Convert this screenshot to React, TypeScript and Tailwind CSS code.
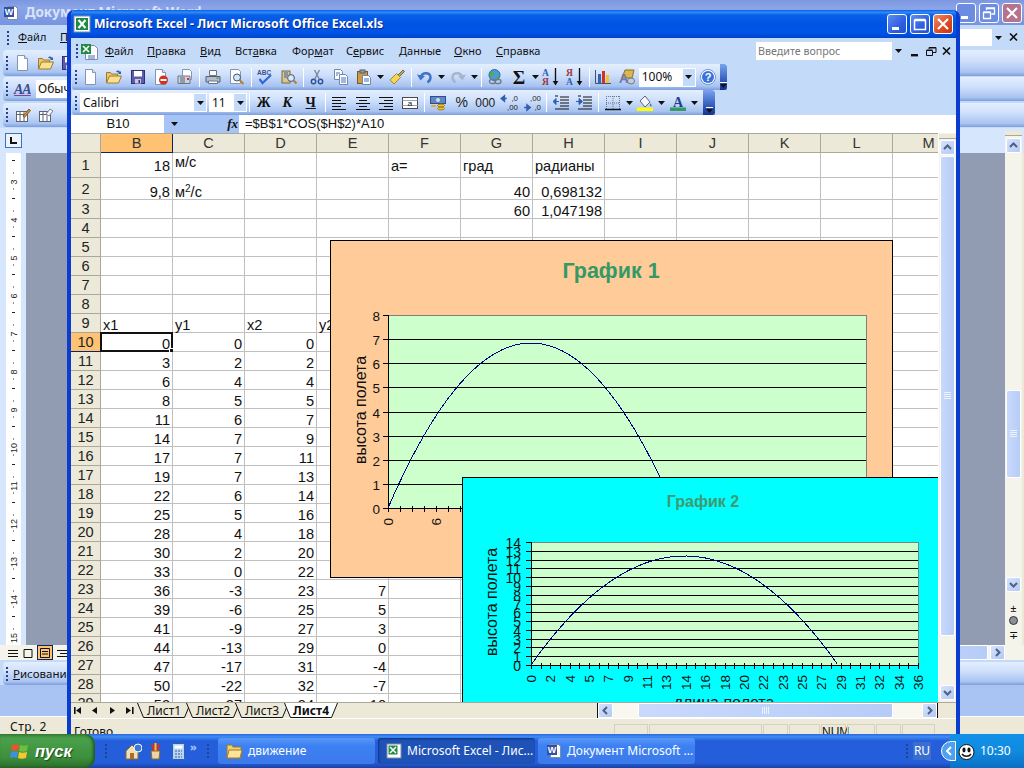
import type { ReactNode } from "react"

const ui = "font-['Noto_Sans','DejaVu_Sans',sans-serif]"
const barBg = "bg-[linear-gradient(to_bottom,#e4effe,#cfe0fb_40%,#a9c4f1_85%,#7d9ddb)]"
const arial = "font-['Liberation_Sans',Arial,sans-serif]"

function Ic({ children, s = 16 }: { children: ReactNode; s?: number }) {
  return (
    <svg width={s} height={s} viewBox="0 0 16 16" className="shrink-0">
      {children}
    </svg>
  )
}

const Page = () => (
  <>
    <path d="M2.5.5h7l3 3v12h-10z" fill="#fff" stroke="#8096b8" />
    <path d="M9.5.5v3h3" fill="#dbe6f7" stroke="#8096b8" />
  </>
)
const DocIcon = () => <Ic><Page /></Ic>
const OpenIcon = () => (
  <Ic>
    <path d="M.5 14V3.5h4l1 1.5h6v2" fill="#eec765" stroke="#9c7a34" />
    <path d="M.5 14l3-7h12l-3 7z" fill="#fbe08e" stroke="#9c7a34" />
    <path d="M10 3c1-2 3-2 4 0l1-1v3h-3l1-1c-1-1-2-1-3-1z" fill="#2f5fb0" />
  </Ic>
)
const SaveIcon = () => (
  <Ic>
    <rect x="1.5" y="1.5" width="13" height="13" fill="#5c5cab" stroke="#30307a" />
    <rect x="4" y="2" width="8" height="5.5" fill="#fff" />
    <rect x="5" y="10" width="6" height="4.5" fill="#c9c9e2" />
    <rect x="8.5" y="11" width="1.5" height="3" fill="#30307a" />
  </Ic>
)
const PermIcon = () => (
  <Ic>
    <Page />
    <circle cx="10.5" cy="11" r="4.5" fill="#d7301f" />
    <rect x="7.5" y="10" width="6" height="2" fill="#fff" />
  </Ic>
)
const MailIcon = () => (
  <Ic>
    <path d="M5.5.5h7l2 2v8h-9z" fill="#fff" stroke="#8096b8" />
    <path d="M1 7h12v7.5H1z" fill="#cdd3dd" stroke="#6a7488" />
    <path d="M3 9h5M3 11h5M3 13h5" stroke="#59647a" />
    <rect x="10" y="9" width="2" height="2" fill="#d33" />
  </Ic>
)
const PrintIcon = () => (
  <Ic>
    <path d="M4.5 1.5h7v5h-7z" fill="#fff" stroke="#6a7488" />
    <path d="M1 7.5h14v5.5H1z" fill="#b5bdca" stroke="#555f74" />
    <path d="M3.5 12h9v2.5h-9z" fill="#fff" stroke="#6a7488" />
    <rect x="11.5" y="8.5" width="2" height="1.5" fill="#37b24a" />
  </Ic>
)
const PreviewIcon = () => (
  <Ic>
    <path d="M1.5.5h8l2 2v12h-10z" fill="#fff" stroke="#8096b8" />
    <circle cx="8" cy="8.5" r="3.5" fill="#cfe6fb" stroke="#47536a" />
    <path d="M10.5 11l4 4" stroke="#b57f33" strokeWidth="2" />
  </Ic>
)
const SpellIcon = () => (
  <Ic>
    <text x="0" y="6" className={arial} fontSize="6.5" fontWeight="700" fill="#3a4f8c">ABC</text>
    <path d="M2.5 10l3 4L14 6" fill="none" stroke="#2f6bd6" strokeWidth="2.2" />
  </Ic>
)
const ResearchIcon = () => (
  <Ic>
    <rect x="1" y="2" width="8" height="12" fill="#d8c68d" stroke="#7a6a3a" />
    <path d="M3 4h4M3 6h4M3 8h3" stroke="#3a63ad" />
    <circle cx="10" cy="9" r="3.4" fill="#d7ecfb" stroke="#47536a" />
    <path d="M12.5 11.5l3 3" stroke="#b57f33" strokeWidth="2" />
  </Ic>
)
const CutIcon = () => (
  <Ic>
    <circle cx="4.5" cy="12.5" r="2.2" fill="none" stroke="#2c4f9c" strokeWidth="1.4" />
    <circle cx="11.5" cy="12.5" r="2.2" fill="none" stroke="#2c4f9c" strokeWidth="1.4" />
    <path d="M5.5 10.5L10.5 1M10.5 10.5L5.5 1" stroke="#78849a" strokeWidth="1.3" />
  </Ic>
)
const CopyIcon = () => (
  <Ic>
    <path d="M1.5.5h6l2 2v8h-8z" fill="#fff" stroke="#6f88b4" />
    <path d="M6.5 5.5h6l2 2v8h-8z" fill="#fff" stroke="#6f88b4" />
    <path d="M3 4h4M3 6h2M8 9h5M8 11h5M8 13h5" stroke="#4d6fb8" />
  </Ic>
)
const PasteIcon = () => (
  <Ic>
    <rect x="1.5" y="2.5" width="10" height="12" fill="#cf9a47" stroke="#7c5a22" />
    <rect x="4" y="1" width="5" height="3" fill="#8f98a8" stroke="#555f74" />
    <path d="M6.5 6.5h6l2 2v7h-8z" fill="#fff" stroke="#6f88b4" />
    <path d="M8 10h5M8 12h5" stroke="#4d6fb8" />
  </Ic>
)
const PainterIcon = () => (
  <Ic>
    <path d="M9 6l5-5 1.5 1.5-5 5z" fill="#b9a36d" stroke="#7a6a3a" />
    <path d="M1 11l6.5-6.5 4 4L5 15z" fill="#f4d558" stroke="#a38a2e" />
  </Ic>
)
const UndoIcon = ({ c, flip }: { c: string; flip?: boolean }) => (
  <Ic>
    <g transform={flip ? "matrix(-1 0 0 1 16 0)" : undefined}>
      <path d="M4 8c1-5 9-5 9.5 0 .2 2-1 4-3 5.5" fill="none" stroke={c} strokeWidth="2.4" />
      <path d="M0 5.5l3.5 6 4.5-4.5z" fill={c} />
    </g>
  </Ic>
)
const LinkIcon = () => (
  <Ic>
    <circle cx="7.5" cy="6" r="5.5" fill="#4e9ad8" stroke="#2e6a9e" />
    <path d="M4 3c2-1 3 0 3 1.5S5 6 5 8 3 7 2.5 5.5zM9 7c2 0 3 0 2.5 1.5S9 10 9 9z" fill="#4caf50" />
    <rect x="2.5" y="10.5" width="6" height="4" rx="2" fill="none" stroke="#6f7a8c" strokeWidth="1.3" />
    <rect x="8" y="10.5" width="6" height="4" rx="2" fill="none" stroke="#6f7a8c" strokeWidth="1.3" />
  </Ic>
)
const SortIcon = ({ top, bottom, topC, botC }: { top: string; bottom: string; topC: string; botC: string }) => (
  <Ic s={18}>
    <text x="0" y="7.5" className="font-['Liberation_Serif',serif]" fontSize="8.5" fontWeight="700" fill={topC}>{top}</text>
    <text x="0" y="15.5" className="font-['Liberation_Serif',serif]" fontSize="8.5" fontWeight="700" fill={botC}>{bottom}</text>
    <path d="M12 0v13" stroke="#111" strokeWidth="1.2" />
    <path d="M9.5 11.5h5L12 15.5z" fill="#111" />
  </Ic>
)
const ChartIcon = () => (
  <Ic>
    <path d="M.5 1v13.5H16" fill="none" stroke="#47536a" />
    <rect x="3" y="5" width="3" height="9" fill="#3a63ad" />
    <rect x="7" y="2" width="3" height="12" fill="#d7301f" />
    <rect x="11" y="6" width="3" height="8" fill="#f2c230" />
  </Ic>
)
const DrawIcon = () => (
  <Ic>
    <path d="M6 1h9l-2 8H3z" fill="#dcb74e" stroke="#8a7126" />
    <text x="0" y="14" className={arial} fontSize="13" fontWeight="700" fill="#6b76b8">A</text>
    <ellipse cx="12" cy="12" rx="3.5" ry="3" fill="#c9ccd6" stroke="#6f7a8c" />
  </Ic>
)
const HelpIcon = () => (
  <Ic>
    <circle cx="8" cy="8" r="7.5" fill="#fff" stroke="#6b94dd" />
    <circle cx="8" cy="8" r="6" fill="#3a72d8" />
    <text x="8" y="12" textAnchor="middle" className={arial} fontSize="11" fontWeight="700" fill="#fff">?</text>
  </Ic>
)
const Lines = ({ d }: { d: string }) => (
  <Ic><path d={d} stroke="#111" strokeWidth="1" fill="none" /></Ic>
)
const MergeIcon = () => (
  <Ic>
    <rect x=".5" y="2.5" width="15" height="11" fill="#fff" stroke="#4a4a4a" />
    <path d="M.5 5.5h15M.5 10.5h15" stroke="#9aa5b8" />
    <text x="8" y="11" textAnchor="middle" className={arial} fontSize="8" fill="#111">a</text>
  </Ic>
)
const MoneyIcon = () => (
  <Ic>
    <rect x=".5" y="1.5" width="15" height="7" fill="#5f86c6" stroke="#2d4f8d" />
    <circle cx="8" cy="5" r="2" fill="#cddcf3" />
    <ellipse cx="11" cy="10.5" rx="3.5" ry="1.4" fill="#f2c230" stroke="#a37d14" />
    <ellipse cx="11" cy="13.5" rx="3.5" ry="1.4" fill="#f2c230" stroke="#a37d14" />
    <path d="M1 11h5" stroke="#f2a530" strokeWidth="2" />
  </Ic>
)
const DecIcon = ({ a, b, flip }: { a: string; b: string; flip?: boolean }) => (
  <Ic s={18}>
    <text x="16" y="6.5" textAnchor="end" className={arial} fontSize="7" fill="#222">{a}</text>
    <text x="16" y="14.5" textAnchor="end" className={arial} fontSize="7" fill="#222">{b}</text>
    <path d={flip ? "M1 12h4M3.5 9.5l3 2.5-3 2.5z" : "M2 4h4M4 1.5L1 4l3 2.5z"} stroke="#2f5fb0" fill="#2f5fb0" strokeWidth="1.2" />
  </Ic>
)
const IndentIcon = ({ right }: { right?: boolean }) => (
  <Ic>
    <path d="M7 2h9M7 5h9M7 8h9M7 11h9M2 14h14M2 1h3" stroke="#111" />
    <path d={right ? "M0 6.5h4M3 3.5L6.5 6.5 3 9.5z" : "M6 6.5H2M3 3.5L0 6.5 3 9.5z"} stroke="#2f5fb0" fill="#2f5fb0" />
  </Ic>
)
const BorderIcon = () => (
  <Ic>
    <path d="M1.5 1v14M8 1v14M14.5 1v14M1 1.5h14M1 8h14" stroke="#6a7488" strokeDasharray="1 1" />
    <path d="M0 14.5h16" stroke="#111" strokeWidth="1.4" />
  </Ic>
)
const FillIcon = () => (
  <Ic>
    <path d="M3 6l5-5 5 6-5 5z" fill="#f4f5f8" stroke="#5a6477" />
    <path d="M13 8c1 1.5 2 2 1.5 3s-2 0-1.5-3z" fill="#3a63ad" />
    <rect x="0" y="12.5" width="16" height="3.5" fill="#ffff00" />
  </Ic>
)
const FontColorIcon = () => (
  <Ic>
    <text x="8" y="11.5" textAnchor="middle" className="font-['Liberation_Serif',serif]" fontSize="14" fontWeight="700" fill="#1f3f8f">A</text>
    <rect x="0" y="12.5" width="16" height="3.5" fill="#339966" />
  </Ic>
)

const Sep = () => <span className="w-[5px] flex justify-center shrink-0"><span className="w-[1px] h-[19px] bg-[#7f9cd0] border-r border-white" /></span>
const Tri = () => (
  <svg width="7" height="4" viewBox="0 0 7 4" className="shrink-0"><path d="M0 0h7L3.5 4z" fill="#111" /></svg>
)
const Btn = ({ children, w = "w-[23.5px]" }: { children: ReactNode; w?: string }) => (
  <span className={`${w} h-full flex items-center justify-center shrink-0`}>{children}</span>
)
const Arrow = () => <Btn w="w-[9px]"><Tri /></Btn>
const Grip = () => (
  <span className="w-[3px] flex flex-col gap-[2px] shrink-0">
    {[0, 1, 2, 3].map((i) => <span key={i} className="w-[2px] h-[2px] bg-[#27418a]" />)}
  </span>
)
const BarEnd = () => (
  <span className="w-[12px] self-stretch ml-auto rounded-r-[3px] flex flex-col items-center justify-end pb-[2px] gap-[1px] bg-[linear-gradient(to_bottom,#7ba3ee,#4069c8_50%,#12328e)]">
    <span className="w-[7px] h-[1px] bg-white" />
    <Tri />
  </span>
)
const Combo = ({ text, w }: { text: string; w: string }) => (
  <span className={`${w} h-[19px] bg-white flex items-center shrink-0 border border-white`}>
    <span className="flex-1 pl-[2px] text-[12px] text-[#111]">{text}</span>
    <span className="w-[12px] h-full bg-[#c3daf9] flex items-center justify-center"><Tri /></span>
  </span>
)

function Win({ kind, faded }: { kind: "min" | "max" | "restore" | "close"; faded?: boolean }) {
  const bg = kind === "close"
    ? faded ? "bg-[#b4748e]" : "bg-[linear-gradient(135deg,#ef8a66,#dc4a22_60%,#c53513)]"
    : faded ? "bg-[#6c8ce2]" : "bg-[linear-gradient(135deg,#5f8df2,#2f5fe0_60%,#2350cc)]"
  return (
    <span className={`w-[20px] h-[20px] rounded-[3px] border border-white flex items-center justify-center ${bg}`}>
      <svg width="14" height="14" viewBox="0 0 14 14">
        {kind === "min" && <rect x="2" y="10" width="7" height="3" fill="#fff" />}
        {kind === "max" && <path d="M1.5 3.5h11v9h-11zM1.5 2.5h11" fill="none" stroke="#fff" strokeWidth="1.5" />}
        {kind === "restore" && <path d="M1.5 6.5h7v6h-7zM1.5 5.8h7M4.5 4V2h8v6h-3M4.5 2.7h8" fill="none" stroke="#fff" strokeWidth="1.3" />}
        {kind === "close" && <path d="M2 2l10 10M12 2L2 12" stroke="#fff" strokeWidth="2.2" />}
      </svg>
    </span>
  )
}

const MiniCtl = ({ kind }: { kind: "min" | "restore" | "close" }) => (
  <svg width="13" height="11" viewBox="0 0 13 11" className="shrink-0">
    {kind === "min" && <rect x="2" y="8" width="7" height="2.4" fill="#111" />}
    {kind === "restore" && <path d="M1.5 4.5h6v5h-6zM1.5 4h6M4 3V1.5h7v5H8M4 2h7" fill="none" stroke="#111" />}
    {kind === "close" && <path d="M2 1.5l7 7M9 1.5l-7 7" stroke="#111" strokeWidth="1.7" />}
  </svg>
)

function ScrollBtn({ dir, cls = "" }: { dir: "up" | "down" | "left" | "right"; cls?: string }) {
  const d = { up: "M2 7l3.5-3.5L9 7", down: "M2 4l3.5 3.5L9 4", left: "M7 2L3.5 5.5 7 9", right: "M4 2l3.5 3.5L4 9" }[dir]
  return (
    <span className={`w-[15px] h-[15px] shrink-0 rounded-[2px] border border-white flex items-center justify-center bg-[linear-gradient(to_bottom_right,#d5e2fd,#b4c9f5)] ${cls}`}>
      <svg width="11" height="11" viewBox="0 0 11 11"><path d={d} fill="none" stroke="#4d6185" strokeWidth="2" /></svg>
    </span>
  )
}
const Thumb = ({ cls, vertical }: { cls: string; vertical?: boolean }) => (
  <span className={`shrink-0 rounded-[2px] border border-white flex items-center justify-center bg-[linear-gradient(to_right,#c9d9fc,#b6ccf7)] ${cls}`}>
    {vertical ? (
      <svg width="7" height="8" viewBox="0 0 7 8"><path d="M0 .5h7M0 2.5h7M0 4.5h7M0 6.5h7" stroke="#eef3fe" /></svg>
    ) : (
      <svg width="8" height="7" viewBox="0 0 8 7"><path d="M.5 0v7M2.5 0v7M4.5 0v7M6.5 0v7" stroke="#eef3fe" /></svg>
    )}
  </span>
)

const colLetters = ["B", "C", "D", "E", "F", "G", "H", "I", "J", "K", "L", "M"]
type Cell = string | ReactNode | null
const sheet: Record<number, Cell[]> = {
  1: ["18", <span className="mb-[4px]">м/с</span>, null, null, "a=", "град", "радианы"],
  2: ["9,8", <span>м<sup className="text-[10px] leading-none">2</sup>/с</span>, null, null, null, "40", "0,698132"],
  3: [null, null, null, null, null, "60", "1,047198"],
  9: ["x1", "y1", "x2", "y2"],
  10: ["0", "0", "0"],
  11: ["3", "2", "2"],
  12: ["6", "4", "4"],
  13: ["8", "5", "5"],
  14: ["11", "6", "7"],
  15: ["14", "7", "9"],
  16: ["17", "7", "11"],
  17: ["19", "7", "13"],
  18: ["22", "6", "14"],
  19: ["25", "5", "16"],
  20: ["28", "4", "18"],
  21: ["30", "2", "20"],
  22: ["33", "0", "22"],
  23: ["36", "-3", "23", "7"],
  24: ["39", "-6", "25", "5"],
  25: ["41", "-9", "27", "3"],
  26: ["44", "-13", "29", "0"],
  27: ["47", "-17", "31", "-4"],
  28: ["50", "-22", "32", "-7"],
  29: ["53", "-27", "34", "-10"],
}
const leftText = new Set(["a=", "град", "радианы", "x1", "y1", "x2", "y2"])
const rowNums = Array.from({ length: 29 }, (_, i) => i + 1)

function Row({ n }: { n: number }) {
  const h = n === 1 ? "h-[25px]" : n === 2 ? "h-[22px]" : "h-[19px]"
  const active = n === 10
  return (
    <div className={`flex ${h}`}>
      <div className={`w-[30px] shrink-0 flex items-center justify-center pt-[2px] border-r border-b ${active ? "bg-[#ffc273] border-[#0a246a]" : "bg-[#ece9d8] border-[#aca899]"} text-[#222]`}>{n}</div>
      {colLetters.map((c, i) => {
        const v = sheet[n]?.[i]
        const isLeft = typeof v !== "string" || leftText.has(v)
        return (
          <div
            key={c}
            className={`w-[72px] shrink-0 relative flex items-end ${n === 1 ? "pb-[4px]" : ""} border-r border-b border-[#c0c0c0] px-[2px] leading-[13px] ${isLeft ? "justify-start" : "justify-end"} text-[#111]`}
          >
            {v}
            {active && c === "B" && (
              <span className="absolute -left-[1px] -top-[1px] w-[73px] h-[20px] border-2 border-[#111]">
                <span className="absolute -right-[3px] -bottom-[3px] w-[5px] h-[5px] bg-[#111] border border-white" />
              </span>
            )}
          </div>
        )
      })}
    </div>
  )
}

function parabola(x0: number, x1: number, base: number, top: number) {
  const mid = (x0 + x1) / 2
  const half = (x1 - x0) / 2
  const pts: string[] = []
  for (let x = x0; x <= x1 + 0.1; x += 6) {
    const t = (x - mid) / half
    pts.push(`${x},${(base - (base - top) * (1 - t * t)).toFixed(1)}`)
  }
  return pts.join(" ")
}

function Chart1() {
  const rows = Array.from({ length: 9 }, (_, i) => i)
  const ticks = Array.from({ length: 40 }, (_, i) => i)
  return (
    <div className="absolute left-[259px] top-[107px] w-[563px] h-[338px]">
      <svg width="563" height="338" className={arial}>
        <rect x=".5" y=".5" width="562" height="337" fill="#ffcc99" stroke="#000" />
        <text x="281" y="38" textAnchor="middle" fontSize="21.5" fontWeight="700" fill="#339966">График 1</text>
        <rect x="58.5" y="75.5" width="478" height="193" fill="#ccffcc" stroke="#808080" />
        {rows.map((i) => {
          const y = Math.round(75 + i * 24.125) + 0.5
          return (
            <g key={i}>
              <path d={`M53 ${y}H${i === 0 ? 59 : 536}`} stroke="#000" />
              <text x="50" y={y + 5} textAnchor="end" fontSize="13.5" fill="#111">{8 - i}</text>
            </g>
          )
        })}
        <path d="M58.5 75v197" stroke="#000" />
        {ticks.map((i) => (
          <path key={i} d={`M${58.5 + i * 12} 266v6`} stroke="#000" />
        ))}
        {[0, 6, 12].map((l, i) => (
          <text key={l} transform={`rotate(-90 ${63 + i * 48} 278)`} x={63 + i * 48} y="278" textAnchor="end" fontSize="13.5" fill="#111">{l}</text>
        ))}
        <text transform="rotate(-90 36 170)" x="36" y="170" textAnchor="middle" fontSize="16" fill="#111">высота полета</text>
        <polyline points={parabola(58, 344, 268, 103)} fill="none" stroke="#000080" shapeRendering="crispEdges" />
      </svg>
    </div>
  )
}

function Chart2() {
  const rows = Array.from({ length: 15 }, (_, i) => i)
  const ticks = Array.from({ length: 41 }, (_, i) => i)
  const labels = [0, 2, 4, 5, 7, 9, 11, 13, 14, 16, 18, 20, 22, 23, 25, 27, 29, 31, 32, 34, 36]
  return (
    <div className="absolute left-[391px] top-[344px] w-[476px] h-[240px]">
      <svg width="476" height="240" className={arial}>
        <rect x=".5" y=".5" width="480" height="300" fill="#00ffff" stroke="#000" />
        <text x="241" y="30" textAnchor="middle" fontSize="16" fontWeight="700" fill="#3f9a70">График 2</text>
        <rect x="69.5" y="65.5" width="387" height="123" fill="#ccffcc" stroke="#808080" />
        {rows.map((i) => {
          const y = Math.round(65 + i * 8.786) + 0.5
          return (
            <g key={i}>
              <path d={`M64 ${y}H${i === 0 ? 70 : 456}`} stroke="#000" />
              <text x="59" y={y + 5} textAnchor="end" fontSize="14" fill="#111">{14 - i}</text>
            </g>
          )
        })}
        <path d="M69.5 65v127" stroke="#000" />
        {ticks.map((i) => (
          <path key={i} d={`M${Math.round(69 + i * 9.675) + 0.5} 186v6`} stroke="#000" />
        ))}
        {labels.map((l, i) => {
          const x = 74 + i * 19.35
          return (
            <text key={i} transform={`rotate(-90 ${x} 198)`} x={x} y="198" textAnchor="end" fontSize="13.5" fill="#111">{l}</text>
          )
        })}
        <text transform="rotate(-90 35 125)" x="35" y="125" textAnchor="middle" fontSize="16" fill="#111">высота полета</text>
        <text x="262" y="231" textAnchor="middle" fontSize="16" fill="#111">длина полета</text>
        <polyline points={parabola(69, 376, 188, 79)} fill="none" stroke="#000080" shapeRendering="crispEdges" />
      </svg>
    </div>
  )
}

function SheetTab({ label, active }: { label: string; active?: boolean }) {
  return (
    <span className={`relative h-[15px] flex items-center justify-center w-[54px] -mr-[5px] text-[12px] leading-none text-[#111] ${active ? "font-bold" : ""}`}>
      <svg width="54" height="15" viewBox="0 0 54 15" className="absolute inset-0">
        <path d="M.5 0l6 14.5h41l6-14.5" fill={active ? "#fff" : "#ece9d8"} stroke="#111" />
      </svg>
      <span className="relative">{label}</span>
    </span>
  )
}

function ExcelWindow() {
  const menu: [string, string, string, string][] = [
    ["", "Ф", "айл", "w-[42px]"],
    ["", "П", "равка", "w-[53px]"],
    ["", "В", "ид", "w-[35px]"],
    ["Вст", "а", "вка", "w-[57px]"],
    ["Фор", "м", "ат", "w-[54px]"],
    ["С", "е", "рвис", "w-[53px]"],
    ["", "Д", "анные", "w-[55px]"],
    ["", "О", "кно", "w-[42px]"],
    ["", "С", "правка", "w-[50px]"],
  ]
  return (
    <div className={`absolute left-[67px] top-[10px] w-[893px] h-[758px] flex flex-col overflow-hidden rounded-t-[7px] border-x-4 border-[#0a3ccf] ${ui}`}>
      <div className="h-[28px] -mx-[4px] shrink-0 flex items-center px-[4px] gap-[3px] bg-[linear-gradient(to_bottom,#0a5ce8,#2f8bf5_8%,#0a5fe8_18%,#0054e3_50%,#0055e8_80%,#0044cc)]">
        <svg width="18" height="18" viewBox="0 0 18 18" className="ml-[2px] shrink-0">
          <rect x="1" y="1" width="16" height="16" fill="#fff" stroke="#7b8ea8" />
          <rect x="3" y="3" width="12" height="12" fill="#1f8a43" />
          <path d="M5.5 5l7 8M12.5 5l-7 8" stroke="#fff" strokeWidth="2" />
        </svg>
        <span className="text-[12.3px] font-bold text-white [text-shadow:1px_1px_0_#0a2a90]">Microsoft Excel - Лист Microsoft Office Excel.xls</span>
        <span className="ml-auto flex gap-[3px] mr-[3px]">
          <Win kind="min" />
          <Win kind="max" />
          <Win kind="close" />
        </span>
      </div>

      <div className="h-[26px] shrink-0 flex items-center bg-[#c3daf9] text-[11px] text-[#111]">
        <span className="w-[34px] flex items-center gap-[1px] pl-[5px] shrink-0">
          <Grip />
          <svg width="19" height="17" viewBox="0 0 19 17">
            <path d="M5.5 2.5h9l3 3v11h-12z" fill="#fff" stroke="#7b8ea8" />
            <rect x="1" y="1" width="10" height="10" fill="#1f8a43" />
            <path d="M3 3l6 6M9 3L3 9" stroke="#fff" strokeWidth="1.6" />
            <path d="M8 13h7M8 15h7" stroke="#4d6fb8" />
          </svg>
        </span>
        {menu.map(([a, u, b, w]) => (
          <span key={u + b} className={`${w} shrink-0`}>{a}<u>{u}</u>{b}</span>
        ))}
        <span className="ml-auto w-[148px] h-[18px] bg-white flex items-center text-[#777] text-[10.7px] pl-[2px]">
          <span className="flex-1">Введите вопрос</span>
          <span className="w-[12px] h-full bg-[#c3daf9] flex items-center justify-center"><Tri /></span>
        </span>
        <span className="w-[52px] flex items-center justify-between pl-[5px] pr-[2px]">
          <MiniCtl kind="min" />
          <MiniCtl kind="restore" />
          <MiniCtl kind="close" />
        </span>
      </div>

      <div className="bg-[#c3daf9] shrink-0 h-[51px] flex flex-col pl-[1px]">
        <div className={`w-[655px] h-[26px] flex items-center pl-[3px] rounded-l-[3px] ${barBg}`}>
          <Grip />
          <span className="w-[2px]" />
          <Btn><DocIcon /></Btn>
          <Btn><OpenIcon /></Btn>
          <Btn><SaveIcon /></Btn>
          <Btn><PermIcon /></Btn>
          <Btn><MailIcon /></Btn>
          <Sep />
          <Btn><PrintIcon /></Btn>
          <Btn><PreviewIcon /></Btn>
          <Sep />
          <Btn><SpellIcon /></Btn>
          <Btn><ResearchIcon /></Btn>
          <Sep />
          <Btn><CutIcon /></Btn>
          <Btn><CopyIcon /></Btn>
          <Btn><PasteIcon /></Btn>
          <Arrow />
          <Btn><PainterIcon /></Btn>
          <Sep />
          <Btn><UndoIcon c="#3d72c4" /></Btn>
          <Arrow />
          <Btn><UndoIcon c="#a6b5c9" flip /></Btn>
          <Arrow />
          <Sep />
          <Btn><LinkIcon /></Btn>
          <Btn><span className="text-[19px] font-bold leading-none font-['Liberation_Serif',serif] text-[#111]">Σ</span></Btn>
          <Arrow />
          <Btn><SortIcon top="А" bottom="Я" topC="#2f5fb0" botC="#9a3a3a" /></Btn>
          <Btn><SortIcon top="Я" bottom="А" topC="#9a3a3a" botC="#2f5fb0" /></Btn>
          <Sep />
          <Btn><ChartIcon /></Btn>
          <Btn><DrawIcon /></Btn>
          <Combo text="100%" w="w-[57px]" />
          <Btn w="w-[24px]"><HelpIcon /></Btn>
          <BarEnd />
        </div>
        <div className={`w-[643px] h-[25px] flex items-center pl-[3px] rounded-l-[3px] ${barBg}`}>
          <Grip />
          <span className="w-[2px]" />
          <Combo text="Calibri" w="w-[127px]" />
          <span className="w-[2px]" />
          <Combo text="11" w="w-[38px]" />
          <Sep />
          <Btn><span className="text-[14px] font-bold font-['Liberation_Serif',serif] text-[#111]">Ж</span></Btn>
          <Btn><span className="text-[14px] font-bold italic font-['Liberation_Serif',serif] text-[#111]">К</span></Btn>
          <Btn><span className="text-[14px] font-bold underline font-['Liberation_Serif',serif] text-[#111]">Ч</span></Btn>
          <Sep />
          <Btn><Lines d="M1 2.5h14M1 5.5h9M1 8.5h14M1 11.5h9M1 14.5h14" /></Btn>
          <Btn><Lines d="M1 2.5h14M4 5.5h8M1 8.5h14M4 11.5h8M1 14.5h14" /></Btn>
          <Btn><Lines d="M1 2.5h14M6 5.5h9M1 8.5h14M6 11.5h9M1 14.5h14" /></Btn>
          <Btn><MergeIcon /></Btn>
          <Sep />
          <Btn><MoneyIcon /></Btn>
          <Btn><span className={`text-[14px] text-[#222] ${arial}`}>%</span></Btn>
          <Btn><span className={`text-[12px] text-[#222] ${arial}`}>000</span></Btn>
          <Btn><DecIcon a=",0" b=",00" /></Btn>
          <Btn><DecIcon a=",00" b=",0" flip /></Btn>
          <Sep />
          <Btn><IndentIcon /></Btn>
          <Btn><IndentIcon right /></Btn>
          <Sep />
          <Btn><BorderIcon /></Btn>
          <Arrow />
          <Btn><FillIcon /></Btn>
          <Arrow />
          <Btn><FontColorIcon /></Btn>
          <Arrow />
          <BarEnd />
        </div>
      </div>

      <div className={`h-[18px] shrink-0 flex items-center bg-white text-[12px] text-[#111] ${arial}`}>
        <span className="w-[93px] pl-[1px] text-center text-[13px] shrink-0">B10</span>
        <span className="w-[75px] h-full bg-[#a6c4f5] flex items-center justify-between pl-[7px] pr-[1px] shrink-0">
          <Tri />
          <span className="text-[13px] italic font-['Liberation_Serif',serif] font-bold">fx</span>
        </span>
        <span className="pl-[6px] text-[13px]">=$B$1*COS($H$2)*A10</span>
      </div>

      <div className="h-[569px] shrink-0 flex">
        <div className={`w-[867px] h-full relative overflow-hidden bg-white text-[14.6px] ${arial}`}>
          <div className="flex h-[20px] border-t border-[#aca899] bg-[#ece9d8] text-[#333]">
            <span className="w-[30px] shrink-0 border-r border-b border-[#aca899]" />
            {colLetters.map((c) => (
              <span
                key={c}
                className={`w-[72px] shrink-0 flex items-center justify-center pt-[1px] border-r border-b ${c === "B" ? "bg-[#ffc273] border-[#0a246a]" : "border-[#aca899]"}`}
              >
                {c}
              </span>
            ))}
          </div>
          {rowNums.map((n) => <Row key={n} n={n} />)}
          <Chart1 />
          <Chart2 />
        </div>
        <div className="w-[18px] h-full shrink-0 flex flex-col items-center bg-[#f5f4ea] border-l border-white pt-[1px]">
          <span className="w-full h-[5px] mb-[1px] bg-[#ece9d8] border-b border-[#aca899]" />
          <ScrollBtn dir="up" />
          <Thumb vertical cls="w-[15px] h-[480px] mt-[1px] mb-[49px]" />
          <ScrollBtn dir="down" />
        </div>
      </div>

      <div className="h-[16px] shrink-0 flex items-center bg-[#ece9d8] border-t border-[#aca899] text-[#111]">
        <span className="w-[66px] shrink-0 flex items-center justify-between pl-[2px] pr-[3px]">
          {["M8 2v7l-5-3.5zM1 2h1.6v7H1z", "M7 2v7L2 5.5z", "M3 2v7l5-3.5z", "M2 2v7l5-3.5zM8 2h1.6v7H8z"].map((d) => (
            <svg key={d} width="10" height="11" viewBox="0 0 10 11"><path d={d} fill="#111" /></svg>
          ))}
        </span>
        <SheetTab label="Лист1" />
        <SheetTab label="Лист2" />
        <SheetTab label="Лист3" />
        <SheetTab label="Лист4" active />
        <span className="ml-auto flex items-center w-[341px] h-[15px] bg-[#f8f7f0] border-x border-[#111]">
          <ScrollBtn dir="left" />
          <Thumb cls="w-[255px] h-[15px] ml-[25px]" />
          <span className="flex-1" />
          <ScrollBtn dir="right" />
        </span>
        <span className="w-[18px] shrink-0" />
      </div>

      <div className="flex-1 flex items-start bg-[#ece9d8] border-t border-white pl-[3px] pt-[4px] text-[12px] text-[#111]">
        <span>Готово</span>
        <span className={`ml-auto flex h-[14px] mt-[1px] mr-[21px] gap-[1px] text-[12px] leading-[15px] text-center ${arial}`}>
          {["w-[34px]", "w-[113px]", "w-[25px]", "w-[31px]", "w-[25px]", "w-[28px]", "w-[25px]", "w-[33px]"].map((w, i) => (
            <span key={i} className={`${w} border border-[#d5d2c0]`}>{i === 4 ? "NUM" : ""}</span>
          ))}
        </span>
      </div>
    </div>
  )
}

function WordWindow() {
  const dots = Array.from({ length: 13 }, (_, i) => i)
  return (
    <div className={`absolute inset-0 flex flex-col bg-[#c3daf9] ${ui}`}>
      <div className="h-[25px] shrink-0 flex items-center pl-[3px] pr-[2px] gap-[6px] bg-[linear-gradient(to_bottom,#7c97e0,#8aa4e8_30%,#7894e0)]">
        <svg width="16" height="16" viewBox="0 0 16 16" className="shrink-0">
          <path d="M4.5 1.5h8l2 2v11h-10z" fill="#fff" stroke="#7b8ea8" />
          <rect x="1" y="2" width="10" height="10" fill="#2f4fa8" />
          <text x="6" y="10" textAnchor="middle" className={arial} fontSize="9" fontWeight="700" fill="#fff">W</text>
        </svg>
        <span className="text-[13.5px] font-bold text-[#d9e2f8]">Документ Microsoft Word</span>
        <span className="ml-auto flex gap-[3px]">
          <Win kind="min" faded />
          <Win kind="restore" faded />
          <Win kind="close" faded />
        </span>
      </div>

      <div className="h-[25px] shrink-0 flex items-center pl-[7px] text-[11px] text-[#111]">
        <Grip />
        <span className="ml-[8px] w-[42px]"><u>Ф</u>айл</span>
        <span><u>П</u>равка</span>
        <span className="ml-auto w-[47px] h-[17px] bg-white flex justify-end">
          <span className="w-[13px] h-full bg-[#c3daf9] flex items-center justify-center"><Tri /></span>
        </span>
        <span className="w-[19px] flex justify-end pr-[3px]"><MiniCtl kind="close" /></span>
      </div>

      <div className={`h-[26px] shrink-0 ml-[3px] flex items-center pl-[3px] rounded-l-[4px] ${barBg}`}>
        <Grip />
        <span className="w-[2px]" />
        <Btn w="w-[23px]"><DocIcon /></Btn>
        <Btn w="w-[23px]"><OpenIcon /></Btn>
        <Btn w="w-[23px]"><SaveIcon /></Btn>
      </div>
      <div className={`h-[24px] mt-[1px] shrink-0 ml-[3px] flex items-center pl-[3px] rounded-l-[4px] ${barBg}`}>
        <Grip />
        <span className="w-[5px]" />
        <span className="font-['Liberation_Serif',serif] italic font-bold text-[14px] text-[#3a4f8c] underline decoration-[#8a3fa0] w-[20px] tracking-[-1px]">AA</span>
        <span className="h-[18px] w-[120px] ml-[2px] bg-white text-[12px] text-[#111] pl-[2px] leading-[18px]">Обычный</span>
      </div>
      <div className={`h-[24px] mt-[2px] shrink-0 ml-[3px] flex items-center pl-[3px] rounded-l-[4px] ${barBg}`}>
        <Grip />
        <span className="w-[2px]" />
        <Btn w="w-[23px]">
          <Ic>
            <rect x="1.5" y="4.5" width="11" height="10" fill="#fff" stroke="#5a6477" />
            <path d="M1.5 7.5h11M5 4.5v10M9 4.5v10" stroke="#5a6477" />
            <path d="M8 9l6-7 1.5 1.5-6 7z" fill="#d9893a" stroke="#8a5a20" />
          </Ic>
        </Btn>
        <Btn w="w-[23px]">
          <Ic>
            <rect x="1.5" y="4.5" width="11" height="10" fill="#fff" stroke="#5a6477" />
            <path d="M1.5 7.5h11M5 4.5v10M9 4.5v10" stroke="#5a6477" />
            <path d="M8 7l4-5 3 2-4 5z" fill="#f4f5f8" stroke="#7a8496" />
          </Ic>
        </Btn>
      </div>

      <div className="h-[25px] mt-[1px] shrink-0 flex items-center bg-[#d6e6fd] pl-[5px]">
        <span className="w-[17px] h-[15px] bg-[#eef3fb] border border-[#3a6fc4] flex items-center justify-center">
          <svg width="9" height="9" viewBox="0 0 9 9"><path d="M2 1v6h6" fill="none" stroke="#111" strokeWidth="2" /></svg>
        </span>
        <span className="ml-auto mr-[2px] w-[17px] self-end flex flex-col items-center bg-[#f5f4ea]">
          <span className="w-full h-[5px] bg-[#ece9d8] border-b border-[#aca899]" />
          <span className="h-[2px]" />
          <ScrollBtn dir="up" />
        </span>
      </div>

      <div className="h-[492px] shrink-0 flex">
        <div className="w-[26px] shrink-0 pl-[6px] bg-[#d6e6fd]">
          <svg width="15" height="492" className={arial}>
            <rect width="15" height="492" fill="#fff" />
            {dots.map((i) => (
              <g key={i}>
                <text transform={`rotate(-90 11 ${29 + i * 38})`} x="11" y={29 + i * 38} textAnchor="middle" fontSize="9" fill="#222">{i + 3}</text>
                <path d={`M7.5 ${19.5 + i * 38}v1M6 ${7.5 + i * 38}h3M7.5 ${-2.5 + i * 38}v1`} stroke="#222" />
              </g>
            ))}
          </svg>
        </div>
        <div className="flex-1 bg-[#919bb1]" />
        <div className="w-[19px] shrink-0 flex flex-col items-center bg-[#f5f4ea] border-r-2 border-[#ece9d8]">
          <Thumb vertical cls="w-[15px] h-[88px] mt-[237px] mb-[99px]" />
          <ScrollBtn dir="down" />
          <span className="mt-[8px] text-[11px] leading-[16px] text-[#111]">±</span>
          <span className="w-[9px] h-[9px] rounded-full bg-[#8a8f98] border border-[#333]" />
          <span className="text-[11px] leading-[16px] mt-[2px] text-[#111]">∓</span>
        </div>
      </div>

      <div className="h-[15px] shrink-0 flex items-center bg-[#f5f4ea] pl-[5px] pr-[19px]">
        <span className="flex items-center gap-[1px]">
          <Btn w="w-[15px]"><Lines d="M3 5.5h10M3 8.5h10M3 11.5h10" /></Btn>
          <Btn w="w-[15px]"><Lines d="M3 4.5h8v8H3z" /></Btn>
          <span className="w-[16px] h-[15px] bg-[#ffc273] border border-[#0a246a] flex items-center justify-center">
            <svg width="10" height="10" viewBox="0 0 10 10"><path d="M.5.5h9v9h-9zM2 3.5h6M2 6h6" fill="none" stroke="#111" /></svg>
          </span>
          <Btn w="w-[15px]"><Lines d="M3 5.5h10M6 8.5h7M3 11.5h10" /></Btn>
        </span>
        <Thumb cls="ml-auto w-[120px] h-[15px] mr-[2px]" />
        <ScrollBtn dir="right" />
      </div>

      <div className="flex-1 flex flex-col">
        <div className={`h-[23px] mt-[2px] shrink-0 ml-[3px] flex items-center pl-[3px] rounded-l-[4px] ${barBg}`}>
          <Grip />
          <span className="ml-[4px] text-[11.5px] text-[#111]"><u>Р</u>исование</span>
        </div>
        <div className="flex-1 bg-[#a9c4f2]" />
        <div className="h-[52px] shrink-0 bg-[#ece9d8] pl-[10px] pt-[1px] text-[12px] tracking-[0.5px] text-[#111] border-t border-white">Стр. 2</div>
      </div>
    </div>
  )
}

function Taskbar() {
  const task = "w-[157px] h-[26px] shrink-0 rounded-[3px] flex items-center gap-[5px] pl-[8px] text-[12px] text-white"
  const idle = "bg-[linear-gradient(to_bottom,#5a96f5,#3c81f3_30%,#3c79ea)]"
  return (
    <div className={`absolute left-0 top-[734px] w-[1024px] h-[34px] flex items-center bg-[linear-gradient(to_bottom,#2a66de,#3f8cf3_8%,#245edb_20%,#245edb_85%,#1941a5)] ${ui}`}>
      <div className="w-[95px] h-full shrink-0 rounded-r-[10px] flex items-center gap-[5px] pl-[10px] bg-[linear-gradient(to_bottom,#3c8a3c,#4aa04a_15%,#3c8f3c_70%,#2a6b2a)] shadow-[inset_-2px_0_3px_#1f5a1f]">
        <svg width="20" height="18" viewBox="0 0 20 18" className="shrink-0">
          <path d="M2 3c2-1 5-1 7 0l-1 6c-2-1-5-1-7 0z" fill="#e8542c" />
          <path d="M10 3c2 1 5 1 8 0l-1 6c-3 1-6 1-8 0z" fill="#6fbf3a" />
          <path d="M1 10c2-1 5-1 7 0l-1 6c-2-1-5-1-7 0z" fill="#3f8fe0" />
          <path d="M9 10c2 1 5 1 8 0l-1 6c-3 1-6 1-8 0z" fill="#f5c92e" />
        </svg>
        <span className="text-[16.5px] font-bold italic text-white [text-shadow:1px_1px_1px_#1c4a1c] font-['Liberation_Sans',sans-serif]">пуск</span>
      </div>
      <span className="w-[10px]" />
      <Grip />
      <span className="w-[14px]" />
      <span className="w-[22px] flex justify-center">
        <svg width="17" height="17" viewBox="0 0 17 17">
          <path d="M1 8l6-6 6 6v8H1z" fill="#f1dfb5" stroke="#8a6a30" />
          <rect x="5" y="10" width="4" height="6" fill="#b06a2a" />
          <circle cx="13" cy="5" r="4" fill="#3a78d8" stroke="#fff" />
        </svg>
      </span>
      <span className="w-[23px] flex justify-center">
        <svg width="15" height="18" viewBox="0 0 15 18">
          <path d="M4 2l2 8M7.5 1v9M11 2L9 10" stroke="#d7301f" strokeWidth="2" />
          <path d="M7.5 1v9" stroke="#f4c430" strokeWidth="2" />
          <path d="M3 9h9l-1 8H4z" fill="#e8d6a8" stroke="#8a6a30" />
        </svg>
      </span>
      <span className="w-[23px] flex justify-center">
        <svg width="13" height="17" viewBox="0 0 13 17">
          <rect x=".5" y=".5" width="12" height="16" rx="1" fill="#b9d3f3" stroke="#2a5fb0" />
          <rect x="2.5" y="2.5" width="8" height="3" fill="#fff" />
          <path d="M3 8h2M6 8h2M9 8h1M3 11h2M6 11h2M9 11h1M3 14h2M6 14h2M9 14h1" stroke="#2a5fb0" />
        </svg>
      </span>
      <span className="w-[14px] text-[#a9c9fb] text-[11px] font-bold leading-none mb-[10px]">»</span>
      <span className="w-[3px]" />
      <Grip />
      <span className="w-[8px]" />
      <span className={`${task} ${idle}`}>
        <svg width="17" height="15" viewBox="0 0 17 15" className="shrink-0">
          <path d="M1 14V1h5l1 2h8v11z" fill="#f5cf6a" stroke="#9c7a34" />
          <path d="M1 14l2-8h13l-2 8z" fill="#fde49a" stroke="#9c7a34" />
        </svg>
        движение
      </span>
      <span className="w-[3px]" />
      <span className={`${task} bg-[#1e52b7] shadow-[inset_1px_1px_2px_#12367f]`}>
        <svg width="16" height="16" viewBox="0 0 16 16" className="shrink-0">
          <rect x="1" y="1" width="14" height="14" fill="#fff" stroke="#7b8ea8" />
          <rect x="2.5" y="2.5" width="9" height="9" fill="#1f8a43" />
          <path d="M4 4l6 6M10 4l-6 6" stroke="#fff" strokeWidth="1.5" />
        </svg>
        Microsoft Excel - Лис...
      </span>
      <span className="w-[3px]" />
      <span className={`${task} ${idle}`}>
        <svg width="16" height="16" viewBox="0 0 16 16" className="shrink-0">
          <path d="M4.5 1.5h8l2 2v11h-10z" fill="#fff" stroke="#7b8ea8" />
          <rect x="1" y="2" width="10" height="10" fill="#2f4fa8" />
          <text x="6" y="10" textAnchor="middle" className={arial} fontSize="9" fontWeight="700" fill="#fff">W</text>
        </svg>
        Документ Microsoft ...
      </span>
      <span className="flex-1" />
      <Grip />
      <span className="w-[4px]" />
      <span className="w-[18px] h-[18px] bg-[#3a6fd0] text-white text-[12px] flex items-center justify-center">RU</span>
      <span className="w-[10px]" />
      <span className="w-[15px] h-[20px] rounded-l-full -mr-[6px] z-10 bg-[#4fa0ee] border border-white flex items-center justify-center">
        <svg width="8" height="10" viewBox="0 0 8 10"><path d="M6 1L2 5l4 4" fill="none" stroke="#fff" strokeWidth="2" /></svg>
      </span>
      <span className="w-[74px] h-full shrink-0 flex items-center pl-[8px] gap-[5px] text-white text-[12px] bg-[linear-gradient(to_bottom,#1290e8,#0f8bdf_50%,#0c6fc4)]">
        <svg width="17" height="17" viewBox="0 0 17 17" className="shrink-0">
          <circle cx="8.5" cy="9" r="7.5" fill="#fff" stroke="#111" />
          <ellipse cx="6" cy="7" rx="1.6" ry="2.4" fill="#111" />
          <ellipse cx="11" cy="7" rx="1.6" ry="2.4" fill="#111" />
          <path d="M4 11c2 3 7 3 9 0" fill="none" stroke="#111" strokeWidth="1.4" />
        </svg>
        10:30
      </span>
    </div>
  )
}

export default function App() {
  return (
    <div className="relative w-[1024px] h-[768px] overflow-hidden bg-[#c3daf9]">
      <WordWindow />
      <ExcelWindow />
      <Taskbar />
    </div>
  )
}
